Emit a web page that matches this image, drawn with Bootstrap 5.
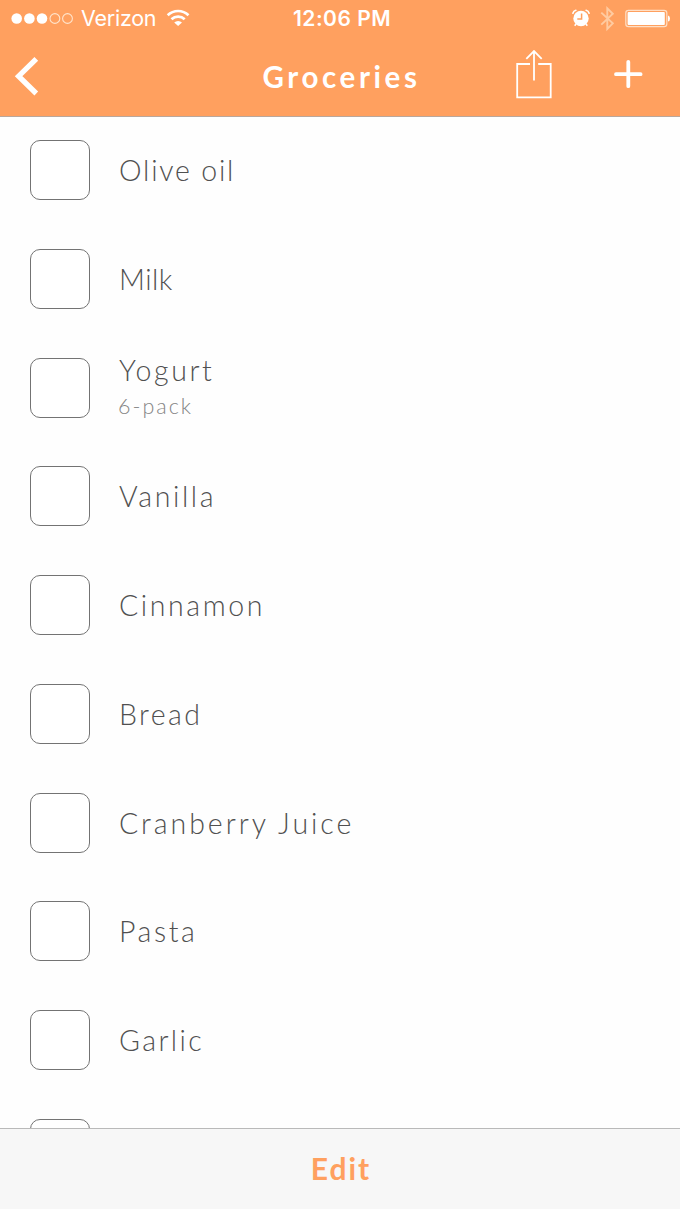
<!DOCTYPE html>
<html lang="en">
<head>
<meta charset="utf-8">
<meta name="viewport" content="width=device-width, initial-scale=1">
<title>Groceries</title>
<link href="https://cdn.jsdelivr.net/npm/bootstrap@5.3.0/dist/css/bootstrap.min.css" rel="stylesheet">
<style>
  :root { --brand: #ffa05f; }
  body { font-family: Lato, "Open Sans", sans-serif; background: #fefefe; }
  .app-top { height: 117px; background: var(--brand); border-bottom: 1px solid #b9a79c; }
  .status-row { height: 37px; font-family: Inter, "Liberation Sans", sans-serif; font-size: 21.5px; line-height: 37px; }
  .status-row > div, .title-row > div { flex: 1 1 0; }
  .carrier { letter-spacing: -.25px; margin-left: 7px; }
  .wifi { margin-left: 7px; }
  .clock { font-weight: 600; font-size: 21px; letter-spacing: .5px; padding-left: 4px; }
  .title-row { height: 79px; }
  .screen-title { font-size: 29.5px; font-weight: 700; letter-spacing: 3.6px; line-height: 79px; padding-left: 3px; }
  .items { margin-top: -1.2px; }
  .item { height: 108.75px; padding-left: 30px; gap: 29px; font-size: 28.5px; font-weight: 300; line-height: 36px; color: #505050; }
  .item .tick[type="checkbox"] { width: 60px; height: 60px; border: 1.3px solid #737373; border-radius: 10px; margin: 0; background: #fff; }
  .item .name { letter-spacing: 2.6px; white-space: nowrap; }
  .item .n1 { letter-spacing: 1.8px; }
  .item .n2 { letter-spacing: .5px; }
  .item .n4, .item .n5 { letter-spacing: 2.6px; }
  .item .n7 { letter-spacing: 2.95px; }
  .item .n6, .item .n9 { letter-spacing: 2.4px; }
  .item .note { font-size: 21.5px; line-height: 36px; letter-spacing: 2px; margin-left: -1px; color: #858585; }
  .app-bottom { height: 81px; background: #f7f7f7; border-top: 1px solid #b9b9b9; padding: 0 0 2px 2px; }
  .edit-btn, .edit-btn:hover { color: var(--brand); font-size: 30px; font-weight: 700; letter-spacing: 2px; }
  svg { display: block; flex: none; }
</style>
</head>
<body class="vh-100 d-flex flex-column overflow-hidden">
<header class="app-top flex-shrink-0 text-white">
  <div class="status-row d-flex">
    <div class="d-flex align-items-center">
      <svg class="ms-2" width="66" height="37" viewBox="8 0 66 37" fill="#fff"><circle cx="16.7" cy="18.5" r="5.3"/><circle cx="29.4" cy="18.5" r="5.3"/><circle cx="42" cy="18.5" r="5.3"/><g fill="none" stroke="#ffe4cc" stroke-width="1.1"><circle cx="54.9" cy="18.5" r="4.9"/><circle cx="67.5" cy="18.5" r="4.9"/></g></svg>
      <span class="carrier">Verizon</span>
      <svg class="wifi" width="30" height="37" viewBox="163 0 30 37" fill="none" stroke="#fff" stroke-width="2.7"><path d="M167.7 15.2a15 15 0 0 1 20.800 0M171.500 19.300a9.500 9.500 0 0 1 13.200 0"/><path d="M174.200 22.400a5.800 5.800 0 0 1 7.800 0l-3.900 3.600z" fill="#fff" stroke="none"/></svg>
    </div>
    <div class="clock text-center flex-grow-0 text-nowrap">12:06 PM</div>
    <div class="d-flex justify-content-end">
      <svg width="110" height="37" viewBox="570 0 110 37" fill="none">
        <circle cx="581" cy="18.500" r="7.700" fill="#fff"/><path d="M581.600 13.500v5.500h-4.300" stroke="var(--brand)" stroke-width="1.500"/>
        <path d="M572.900 13.200q.6-2.300 3-2.900M589.100 13.200q-.6-2.300-3-2.900" stroke="#fff" stroke-width="1.600" stroke-linecap="round"/><path d="M576 24l-1.300 1.800M586 24l1.300 1.800" stroke="#fff" stroke-width="1.600"/>
        <path d="M601.300 12.600l11.500 10.800-5.500 5.600V8.300l5.500 5.500-11.500 10.800" stroke="#ffcba1" stroke-width="1.900"/>
        <rect x="625.800" y="10.400" width="41" height="16.300" rx="2.700" stroke="#ffdfc5" stroke-width="1.200"/><rect x="627.600" y="12" width="37.200" height="13" rx="1" fill="#fff"/><path d="M668 15.500q2 .5 2 3t-2 3z" fill="#fff"/>
      </svg>
    </div>
  </div>
  <div class="title-row d-flex">
    <div><button class="btn p-0 border-0" aria-label="Back"><svg width="50" height="79" viewBox="0 37 50 79" fill="none" stroke="#fff" stroke-width="5.300"><path d="M36.300 58.900L18.600 76.200l17.700 17.300"/></svg></button></div>
    <h1 class="screen-title m-0 flex-grow-0">Groceries</h1>
    <div class="d-flex justify-content-end">
      <svg width="170" height="79" viewBox="510 37 170 79" fill="none" stroke="#fff" stroke-width="1.800">
        <path d="M530 64h-12.800v33.300h33.500V64H538.200M534 80.500V51.500M526.300 58.800L534 51l7.700 7.800"/>
        <path d="M628.300 61.800v24.400M616 74.200h24.600" stroke-width="3.800" stroke-linecap="round"/>
      </svg>
    </div>
  </div>
</header>
<main class="flex-fill overflow-hidden">
  <div class="items">
    <label class="item d-flex align-items-center"><input type="checkbox" class="tick form-check-input flex-shrink-0"><span class="name n1">Olive oil</span></label>
    <label class="item d-flex align-items-center"><input type="checkbox" class="tick form-check-input flex-shrink-0"><span class="name n2">Milk</span></label>
    <label class="item d-flex align-items-center"><input type="checkbox" class="tick form-check-input flex-shrink-0"><span class="d-flex flex-column"><span class="name n3">Yogurt</span><span class="note">6-pack</span></span></label>
    <label class="item d-flex align-items-center"><input type="checkbox" class="tick form-check-input flex-shrink-0"><span class="name n4">Vanilla</span></label>
    <label class="item d-flex align-items-center"><input type="checkbox" class="tick form-check-input flex-shrink-0"><span class="name n5">Cinnamon</span></label>
    <label class="item d-flex align-items-center"><input type="checkbox" class="tick form-check-input flex-shrink-0"><span class="name n6">Bread</span></label>
    <label class="item d-flex align-items-center"><input type="checkbox" class="tick form-check-input flex-shrink-0"><span class="name n7">Cranberry Juice</span></label>
    <label class="item d-flex align-items-center"><input type="checkbox" class="tick form-check-input flex-shrink-0"><span class="name n8">Pasta</span></label>
    <label class="item d-flex align-items-center"><input type="checkbox" class="tick form-check-input flex-shrink-0"><span class="name n9">Garlic</span></label>
    <label class="item d-flex align-items-center"><input type="checkbox" class="tick form-check-input flex-shrink-0"></label>
  </div>
</main>
<footer class="app-bottom flex-shrink-0 d-flex justify-content-center align-items-center">
  <button class="edit-btn btn p-0 border-0">Edit</button>
</footer>
<script src="https://cdn.jsdelivr.net/npm/bootstrap@5.3.0/dist/js/bootstrap.bundle.min.js"></script>
</body>
</html>
